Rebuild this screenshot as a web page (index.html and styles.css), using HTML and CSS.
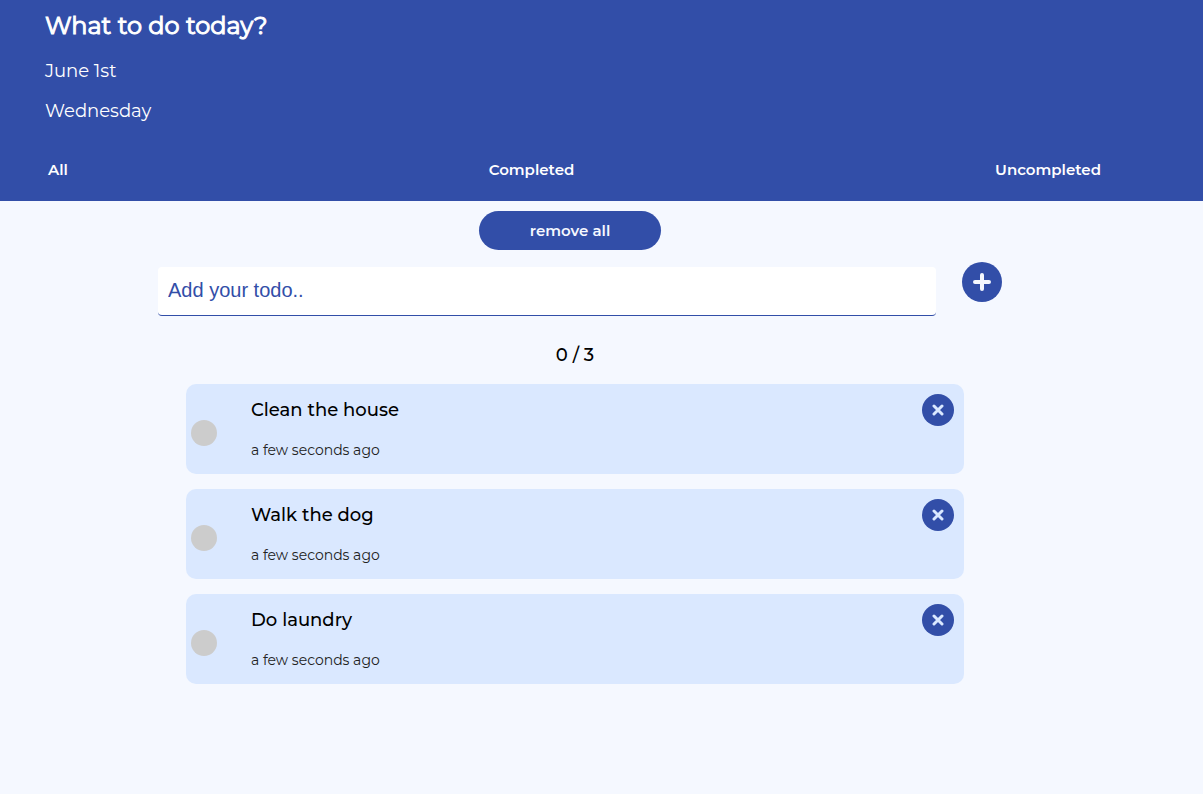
FILE: index.html
```html
<!DOCTYPE html>
<html lang="en">
<head>
<meta charset="utf-8">
<meta name="viewport" content="width=device-width, initial-scale=1">
<title>What to do today?</title>
<link rel="stylesheet" href="styles.css">
</head>
<body>
<header class="header">
  <h1 class="title">What to do today?</h1>
  <p class="date">June 1st</p>
  <p class="date">Wednesday</p>
  <nav class="nav">
    <a class="nav-link" href="#all">All</a>
    <a class="nav-link" href="#completed">Completed</a>
    <a class="nav-link" href="#uncompleted">Uncompleted</a>
  </nav>
</header>
<main>
  <div class="actions"><button class="remove-all" type="button">remove all</button></div>
  <form class="add-form">
    <input class="add-input" type="text" placeholder="Add your todo.." aria-label="Add your todo">
    <button class="round add-button" type="submit" aria-label="Add">
      <svg width="18" height="18" viewBox="0 0 18 18"><path d="M9 2v14M2 9h14"/></svg>
    </button>
  </form>
  <section class="todos">
    <p class="count">0 / 3</p>
    <ul class="list">
      <li class="todo">
        <input class="check" type="checkbox" id="todo-1">
        <div class="body"><label class="name" for="todo-1">Clean the house</label><p class="time">a few seconds ago</p></div>
        <button class="round delete" type="button" aria-label="Delete Clean the house"><svg width="12" height="12" viewBox="0 0 12 12"><path d="M2 2l8 8M10 2l-8 8"/></svg></button>
      </li>
      <li class="todo">
        <input class="check" type="checkbox" id="todo-2">
        <div class="body"><label class="name" for="todo-2">Walk the dog</label><p class="time">a few seconds ago</p></div>
        <button class="round delete" type="button" aria-label="Delete Walk the dog"><svg width="12" height="12" viewBox="0 0 12 12"><path d="M2 2l8 8M10 2l-8 8"/></svg></button>
      </li>
      <li class="todo">
        <input class="check" type="checkbox" id="todo-3">
        <div class="body"><label class="name" for="todo-3">Do laundry</label><p class="time">a few seconds ago</p></div>
        <button class="round delete" type="button" aria-label="Delete Do laundry"><svg width="12" height="12" viewBox="0 0 12 12"><path d="M2 2l8 8M10 2l-8 8"/></svg></button>
      </li>
    </ul>
  </section>
</main>
</body>
</html>
```
FILE: styles.css
```css
* { box-sizing: border-box; }

body {
  margin: 0;
  background: #f5f8ff;
  color: #000;
  font-family: Montserrat, Inter, sans-serif;
}

h1, p, ul { margin: 0; padding: 0; }

button { border: 0; padding: 0; cursor: pointer; }

.header {
  padding: 10px 102px 21px 45px;
  background: #324ea8;
  color: #fff;
}

.title {
  font-size: 24px;
  line-height: 32px;
  font-weight: 400;
  -webkit-text-stroke: 1px #fff;
}

.date { margin-top: 18px; font-size: 18px; line-height: 22px; }

.nav {
  display: flex;
  justify-content: space-between;
  margin-top: 38px;
  padding-left: 3px;
}

.nav-link {
  color: #fff;
  font-size: 15px;
  line-height: 20px;
  font-weight: 600;
  text-decoration: none;
}

.actions {
  display: flex;
  justify-content: center;
  padding: 10px 63px 0 0;
}

.remove-all {
  width: 182px;
  height: 39px;
  border-radius: 20px;
  background: #324ea8;
  color: #f5f8ff;
  font: 600 15px/20px Montserrat, Inter, sans-serif;
}

.add-form {
  display: flex;
  align-items: flex-start;
  gap: 26px;
  padding: 12px 201px 0 158px;
}

.add-input {
  flex: 1;
  min-width: 0;
  height: 49px;
  margin-top: 5px;
  padding: 0 10px 2px;
  border: 0;
  border-bottom: 1px solid #324ea8;
  border-radius: 4px;
  background: #fff;
  color: #324ea8;
  font: 20px "Liberation Sans", Arial, sans-serif;
}

.add-input::placeholder { color: #324ea8; opacity: 1; }

.round {
  display: flex;
  flex: none;
  align-items: center;
  justify-content: center;
  border-radius: 50%;
  background: #324ea8;
}

.round path {
  fill: none;
  stroke: #f5f8ff;
  stroke-width: 4;
  stroke-linecap: round;
}

.add-button { width: 40px; height: 40px; }

.todos { padding: 28px 239px 40px 186px; }

.count {
  font-size: 18px;
  line-height: 22px;
  font-weight: 500;
  text-align: center;
}

.list {
  display: grid;
  gap: 15px;
  margin-top: 18px;
  list-style: none;
}

.todo {
  display: flex;
  align-items: flex-start;
  padding: 10px 10px 10px 5px;
  border-radius: 10px;
  background: #dae8ff;
}

.check {
  appearance: none;
  flex: none;
  width: 26px;
  height: 26px;
  margin: 26px 34px 0 0;
  border-radius: 50%;
  background: #ccc;
}

.check:checked { background: #324ea8; }

.body { flex: 1; padding: 4px 0; }

.name { display: block; font-size: 18px; line-height: 24px; font-weight: 500; }

.time { margin-top: 18px; color: #222; font-size: 14px; line-height: 20px; font-weight: 400; }

.delete { width: 32px; height: 32px; }

.delete path { stroke: #dae8ff; stroke-width: 3; }
```
